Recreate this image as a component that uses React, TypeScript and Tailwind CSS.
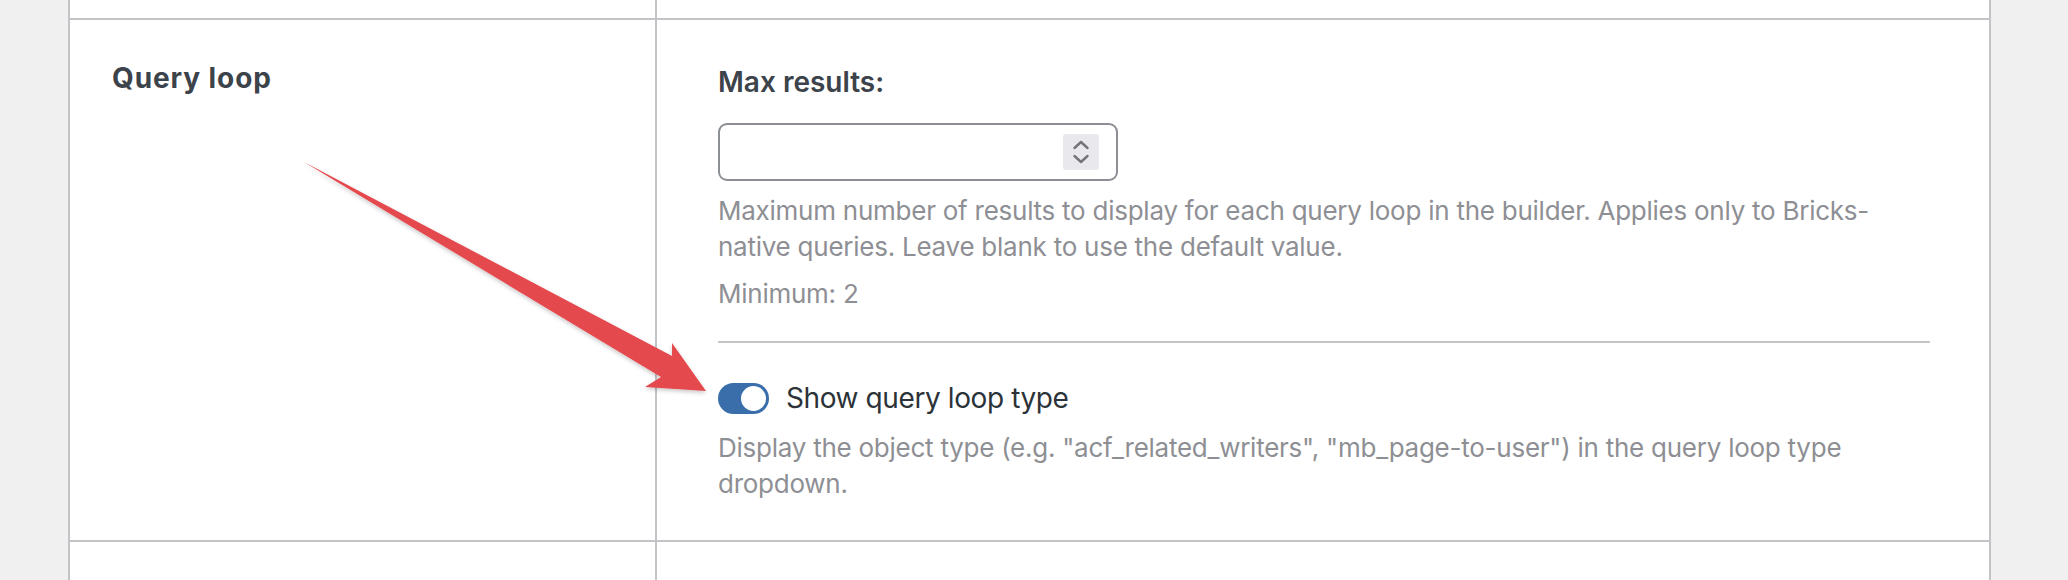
import * as React from "react"

// ── Small pieces ──────────────────────────────────────────────────────────────

function NumberSpinner() {
  return (
    <svg width="36" height="36" viewBox="0 0 36 36" className="block rounded-[3px] bg-[#e9e9ed]" aria-hidden="true">
      <path d="M11.5 14 L18 8 L24.5 14" fill="none" stroke="#74757a" strokeWidth="2.4" strokeLinecap="round" strokeLinejoin="round" />
      <path d="M11.5 22 L18 28 L24.5 22" fill="none" stroke="#74757a" strokeWidth="2.4" strokeLinecap="round" strokeLinejoin="round" />
    </svg>
  )
}

function Toggle() {
  return (
    <span className="flex h-[31px] w-[51px] items-center justify-end rounded-full bg-[#3a6eaa] pr-[3px]">
      <span className="h-[25px] w-[25px] rounded-full bg-white" />
    </span>
  )
}

// Annotation arrow drawn over the page
function RedArrow() {
  return (
    <svg className="pointer-events-none absolute left-0 top-0" width="2068" height="580" viewBox="0 0 2068 580" aria-hidden="true">
      <defs>
        <filter id="arrowShadow" x="-10%" y="-10%" width="120%" height="130%">
          <feDropShadow dx="0" dy="2" stdDeviation="2" floodColor="#000" floodOpacity="0.22" />
        </filter>
      </defs>
      <polygon
        points="304,162 672,356 672,343 706,391 645,387 661,377"
        fill="#e4484d"
        filter="url(#arrowShadow)"
      />
    </svg>
  )
}

// ── Page ──────────────────────────────────────────────────────────────────────

export default function App() {
  return (
    <div className="relative h-[580px] w-[2068px] overflow-hidden bg-[#f0f0f1] font-['Inter','Liberation_Sans',sans-serif]">
      <div className="ml-[68px] w-[1923px] border-x-2 border-[#c3c4c7] bg-white">
        {/* previous row (cut off) */}
        <div className="grid h-[19.5px] grid-cols-[587px_1fr] border-b-2 border-[#c3c4c7]">
          <div className="border-r-2 border-[#c3c4c7]" />
          <div />
        </div>

        {/* Query loop row */}
        <div className="grid grid-cols-[587px_1fr] border-b-2 border-[#c3c4c7]">
          <div className="border-r-2 border-[#c3c4c7] pl-[42px] pt-[39px]">
            <h2 className="text-[28px] font-bold leading-[39px] tracking-[0.9px] text-[#3c434a]">Query loop</h2>
          </div>

          <div className="pb-[38px] pl-[61px] pr-[59px] pt-[43px]">
            <label className="block text-[28px] font-semibold leading-[39px] text-[#3c434a]">Max results:</label>
            <div className="mt-[21px] flex h-[58px] w-[400px] items-center justify-end rounded-[9px] border-2 border-[#8c8f94] pr-[17px]">
              <NumberSpinner />
            </div>
            <p className="mt-[12.5px] text-[26px] leading-[36px] tracking-[-0.25px] text-[#8e8f94]">
              Maximum number of results to display for each query loop in the builder. Applies only to Bricks-
              <br />
              native queries. Leave blank to use the default value.
            </p>
            <p className="mt-[11px] text-[26px] leading-[36px] tracking-[-0.25px] text-[#8e8f94]">Minimum: 2</p>

            <div className="mt-[28.5px] h-[2px] bg-[#c3c4c7]" />

            <div className="mt-[36px] flex h-[39px] items-center gap-[17px]">
              <Toggle />
              <span className="text-[28px] leading-[39px] tracking-[-0.4px] text-[#2c3338]">Show query loop type</span>
            </div>
            <p className="mt-[12.5px] text-[26px] leading-[36px] tracking-[-0.25px] text-[#8e8f94]">
              Display the object type (e.g. "acf_related_writers", "mb_page-to-user") in the query loop type
              <br />
              dropdown.
            </p>
          </div>
        </div>

        {/* next row (cut off) */}
        <div className="grid h-[60px] grid-cols-[587px_1fr]">
          <div className="border-r-2 border-[#c3c4c7]" />
          <div />
        </div>
      </div>

      <RedArrow />
    </div>
  )
}
